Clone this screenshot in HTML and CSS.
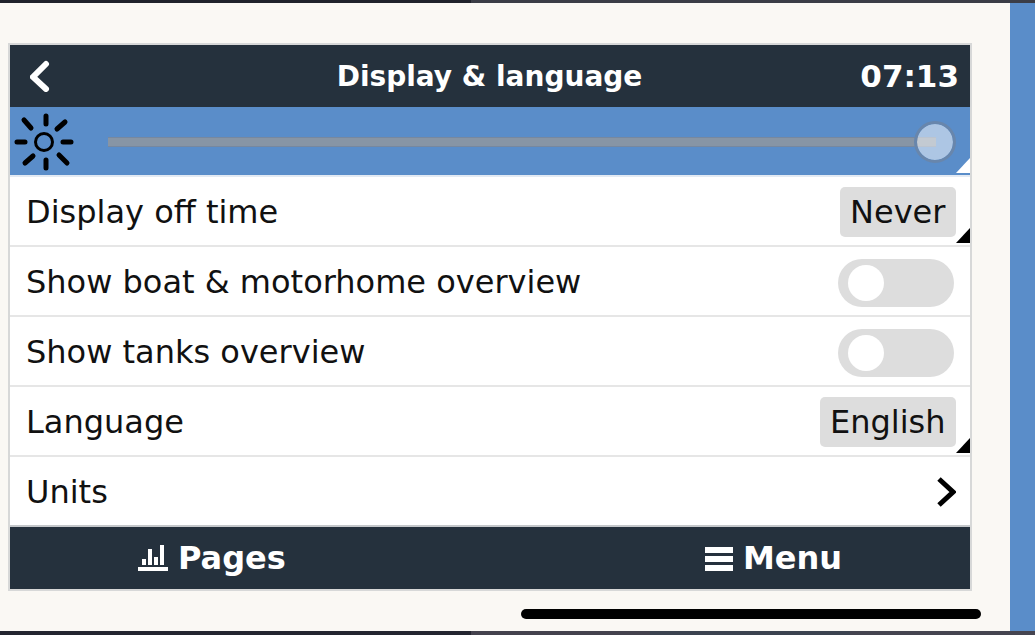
FILE: index.html
```html
<!DOCTYPE html>
<html lang="en">
<head>
    <meta charset="UTF-8">
    <meta name="viewport" content="width=device-width, initial-scale=1.0">
    <title>Display &amp; language</title>
    <link rel="stylesheet" href="styles.css">
</head>
<body>
    <div class="strip strip-top"></div>
    <div class="page">
        <main class="content">
            <div class="screen">
                <header class="header">
                    <button class="back" type="button" aria-label="Back">
                        <svg width="20" height="32" viewBox="0 0 20 32">
                            <path d="M16 4 L3 17 L16 29" fill="none" stroke="#fff" stroke-width="6" stroke-linecap="round"/>
                        </svg>
                    </button>
                    <h1>Display &amp; language</h1>
                    <time class="clock">07:13</time>
                </header>

                <div class="row brightness corner">
                    <svg class="sun" width="60" height="60" viewBox="0 0 60 60" fill="none" stroke="#000" stroke-width="5" stroke-linecap="round">
                        <circle cx="30" cy="30" r="8.5" stroke-width="3"/>
                        <path d="M32 4v8M32 48v8M3 30h8M49 30h8M10 8l7 8M51 10l-8 7M11 51l8-7M45 43l8 8"/>
                    </svg>
                    <input type="range" min="0" max="100" value="100" aria-label="Brightness">
                </div>

                <div class="row corner">
                    <label for="off-time">Display off time</label>
                    <select id="off-time">
                        <option>Never</option>
                    </select>
                </div>
                <div class="row">
                    <label for="boat">Show boat &amp; motorhome overview</label>
                    <input type="checkbox" class="toggle" id="boat">
                </div>
                <div class="row">
                    <label for="tanks">Show tanks overview</label>
                    <input type="checkbox" class="toggle" id="tanks">
                </div>
                <div class="row corner">
                    <label for="language">Language</label>
                    <select id="language">
                        <option>English</option>
                    </select>
                </div>
                <a class="row last" href="#units">
                    Units
                    <svg width="20" height="32" viewBox="0 0 20 32">
                        <path d="M3 3 L17 16 L3 29" fill="none" stroke="#000" stroke-width="5"/>
                    </svg>
                </a>

                <footer class="footer">
                    <button type="button" class="pages">
                        <svg width="30" height="28" viewBox="0 0 30 28" fill="#fff">
                            <path d="M0 23h30v4H0zM4 15h4v6H4zM10 5h4v16h-4zM16 13h4v8h-4zM22 1h4v20h-4z"/>
                        </svg>
                        Pages
                    </button>
                    <button type="button" class="menu">
                        <svg width="28" height="28" viewBox="0 0 28 28" fill="#fff">
                            <path d="M0 3h28v6H0zM0 12h28v6H0zM0 21h28v6H0z"/>
                        </svg>
                        Menu
                    </button>
                </footer>
            </div>
            <div class="home-bar"></div>
        </main>
        <aside class="side"></aside>
    </div>
    <div class="strip strip-bottom"></div>
</body>
</html>
```

FILE: styles.css
```css
* {
    box-sizing: border-box;
}
body {
    margin: 0;
    min-height: 100vh;
    display: flex;
    flex-direction: column;
    font-family: "DejaVu Sans", Verdana, sans-serif;
    font-size: 32px;
    color: #111;
    background-color: #faf8f4;
}
.strip-top {
    height: 3px;
    background: linear-gradient(to right, #20222b 0 471px, #3b3d46 471px);
}
.strip-bottom {
    height: 4px;
    background: linear-gradient(to right, #242530 0 471px, #44424d 471px 650px, #3b4350 650px 850px, #454450 850px);
}
.page {
    flex: 1;
    display: flex;
}
.content {
    flex: 1;
    padding: 40px 38px 0 8px;
}
.side {
    width: 25px;
    background-color: #5a8dc9;
}
.screen {
    border: 2px solid #d7d8d8;
    background-color: #fff;
}
button, select {
    font: inherit;
    color: inherit;
    border: none;
    cursor: pointer;
}
button {
    padding: 0;
    background: none;
}
svg {
    display: block;
}

/* header */
.header {
    display: grid;
    grid-template-columns: 1fr auto 1fr;
    align-items: center;
    height: 62px;
    padding: 0 11px 0 10px;
    background-color: #25313d;
    color: #fff;
}
.back {
    justify-self: start;
    padding-left: 10px;
}
.header h1 {
    margin: 0;
    font-size: 28px;
}
.clock {
    justify-self: end;
    font-size: 31px;
    font-weight: bold;
}

/* settings rows */
.row {
    position: relative;
    display: flex;
    justify-content: space-between;
    align-items: center;
    height: 70px;
    padding: 2px 14px 0 16px;
    border-bottom: 2px solid #e6e6e6;
    color: inherit;
    text-decoration: none;
}
.row.last {
    border-bottom-color: #c4c7ca;
}
.corner::after {
    content: "";
    position: absolute;
    right: 0;
    bottom: 2px;
    width: 14px;
    height: 15px;
    background-color: #000;
    clip-path: polygon(100% 0, 100% 100%, 0 100%);
}
.row select {
    appearance: none;
    height: 50px;
    padding: 0 10px;
    border-radius: 5px;
    background-color: #ddd;
}
.toggle {
    appearance: none;
    display: flex;
    align-items: center;
    width: 116px;
    height: 48px;
    margin: 2px 2px 0 0;
    padding: 0 10px;
    border-radius: 24px;
    background-color: #ddd;
    cursor: pointer;
}
.toggle::before {
    content: "";
    width: 36px;
    height: 36px;
    border-radius: 50%;
    background-color: #fff;
}
.toggle:checked {
    justify-content: flex-end;
    background-color: #5a8dc9;
}

/* brightness */
.brightness {
    gap: 34px;
    padding-left: 4px;
    background-color: #5a8dc9;
    border-bottom-color: #e3eaf3;
}
.brightness.corner::after {
    background-color: #fff;
}
.sun {
    flex: none;
}
.brightness input {
    appearance: none;
    flex: 1;
    min-width: 0;
    height: 42px;
    margin: 0;
    background: none;
}
.brightness input::-webkit-slider-runnable-track {
    height: 10px;
    background: linear-gradient(#7688a0 0 1px, #8795a5 1px 9px, #7688a0 9px) no-repeat;
    background-size: calc(100% - 20px) 100%;
}
.brightness input::-webkit-slider-thumb {
    appearance: none;
    width: 42px;
    height: 42px;
    margin-top: -16px;
    border: 3px solid #6886ac;
    border-radius: 50%;
    background-color: rgba(255, 255, 255, 0.5);
    background-clip: padding-box;
}

/* footer */
.footer {
    display: flex;
    justify-content: space-between;
    height: 62px;
    padding: 0 128px;
    background-color: #25313d;
    color: #fff;
}
.footer button {
    display: flex;
    align-items: center;
    gap: 10px;
    font-weight: bold;
}
.home-bar {
    width: 460px;
    max-width: 100%;
    height: 10px;
    margin: 18px -9px 0 auto;
    border-radius: 5px;
    background-color: #000;
}
```
